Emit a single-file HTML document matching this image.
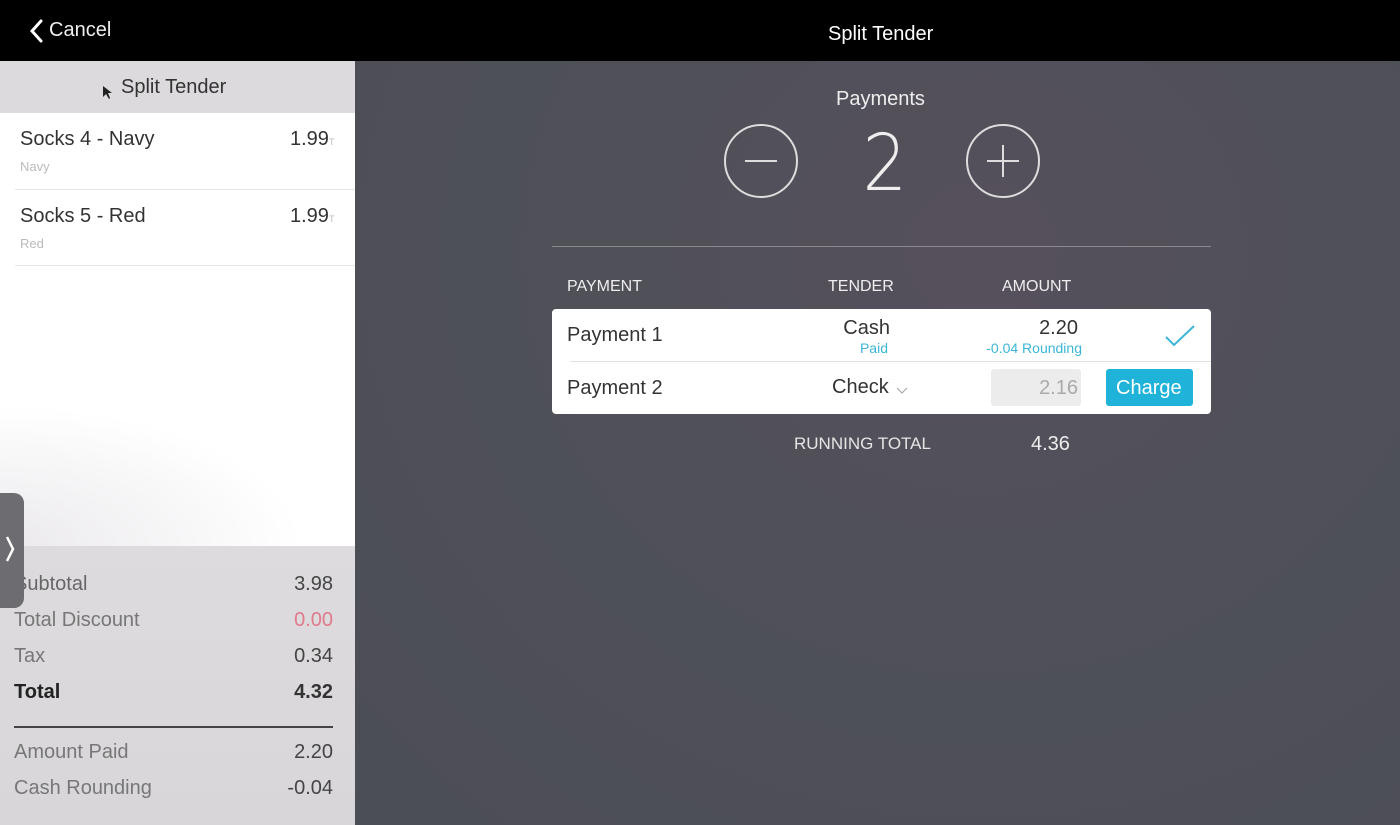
<!DOCTYPE html>
<html><head><meta charset="utf-8"><style>
*{margin:0;padding:0;box-sizing:border-box}
body{width:1400px;height:825px;overflow:hidden;font-family:"Liberation Sans",sans-serif;background:#000;position:relative}
.abs{position:absolute}
#top{left:0;top:0;width:1400px;height:61px;background:#000;color:#fff}
#left{left:0;top:61px;width:355px;height:764px;background:#fff}
#right{left:355px;top:61px;width:1045px;height:764px;background:radial-gradient(ellipse at 60% 25%,#56505c 0%,#4f5058 45%,#4c4e55 100%)}
.t{position:absolute;white-space:nowrap}
</style></head><body>
<div id="top" class="abs">
  <svg class="abs" style="left:28px;top:18px" width="16" height="26"><path d="M13 3 L4 13 L13 23" stroke="#fff" stroke-width="3" fill="none" stroke-linecap="round"/></svg>
  <div class="t" style="left:49px;top:19px;font-size:20px;color:#eee">Cancel</div>
  <div class="t" style="left:828px;top:23px;font-size:20px;color:#fff">Split Tender</div>
</div>
<div id="left" class="abs">
  <div class="abs" style="left:0;top:0;width:355px;height:52px;background:#dcdadc"></div>
  <div class="t" style="left:121px;top:15px;font-size:20px;color:#333">Split Tender</div>
  <svg class="abs" style="left:102px;top:24px" width="10" height="16"><path d="M1 1 L1 12 L4 9 L7 14 L8 13 L6 8 L10 8 Z" fill="#222"/></svg>
  <div class="t" style="left:20px;top:67px;font-size:20px;color:#333">Socks 4 - Navy</div>
  <div class="t" style="left:290px;top:67px;font-size:20px;color:#333">1.99<span style="font-size:9px;color:#bbb">T</span></div>
  <div class="t" style="left:20px;top:98px;font-size:13px;color:#bbb">Navy</div>
  <div class="abs" style="left:15px;top:128px;width:340px;height:1px;background:#e6e6e6"></div>
  <div class="t" style="left:20px;top:144px;font-size:20px;color:#333">Socks 5 - Red</div>
  <div class="t" style="left:290px;top:144px;font-size:20px;color:#333">1.99<span style="font-size:9px;color:#bbb">T</span></div>
  <div class="t" style="left:20px;top:175px;font-size:13px;color:#bbb">Red</div>
  <div class="abs" style="left:15px;top:204px;width:340px;height:1px;background:#e6e6e6"></div>
  <div class="abs" style="left:0;top:320px;width:355px;height:165px;background:radial-gradient(ellipse at 0% 100%,#ebe9ec 0%,rgba(255,255,255,0) 60%)"></div>
  <div class="abs" style="left:0;top:485px;width:355px;height:279px;background:linear-gradient(#dddbdd,#d8d6d9)"></div>
  <div class="t" style="left:14px;top:512px;font-size:20px;color:#666">Subtotal</div><div class="t" style="right:22px;top:512px;font-size:20px;color:#444">3.98</div>
  <div class="t" style="left:14px;top:548px;font-size:20px;color:#777">Total Discount</div><div class="t" style="right:22px;top:548px;font-size:20px;color:#e07a8c">0.00</div>
  <div class="t" style="left:14px;top:584px;font-size:20px;color:#777">Tax</div><div class="t" style="right:22px;top:584px;font-size:20px;color:#444">0.34</div>
  <div class="t" style="left:14px;top:620px;font-size:20px;color:#222;font-weight:bold">Total</div><div class="t" style="right:22px;top:620px;font-size:20px;color:#333;font-weight:bold">4.32</div>
  <div class="abs" style="left:14px;top:665px;width:319px;height:2px;background:#444"></div>
  <div class="t" style="left:14px;top:680px;font-size:20px;color:#777">Amount Paid</div><div class="t" style="right:22px;top:680px;font-size:20px;color:#444">2.20</div>
  <div class="t" style="left:14px;top:716px;font-size:20px;color:#777">Cash Rounding</div><div class="t" style="right:22px;top:716px;font-size:20px;color:#444">-0.04</div>
  <div class="abs" style="left:0;top:432px;width:24px;height:115px;background:#6d6c70;border-radius:0 10px 10px 0"></div>
  <svg class="abs" style="left:4px;top:473px" width="12" height="30"><path d="M3 3 L9 15 L3 27" stroke="#fff" stroke-width="2.5" fill="none"/></svg>
</div>
<div id="right" class="abs">
  <div class="t" style="left:481px;top:27px;font-size:20px;color:#eee">Payments</div>
  <div class="abs" style="left:369px;top:63px;width:74px;height:74px;border:2px solid #ddd;border-radius:50%"></div>
  <div class="abs" style="left:390px;top:99px;width:32px;height:1.5px;background:#ddd"></div>
  <div class="t" style="left:505px;top:58px;font-size:78px;color:#eee;font-family:'DejaVu Sans','Liberation Sans',sans-serif;transform:scaleX(0.9);font-weight:200">2</div>
  <div class="abs" style="left:611px;top:63px;width:74px;height:74px;border:2px solid #ddd;border-radius:50%"></div>
  <div class="abs" style="left:632px;top:99px;width:32px;height:1.5px;background:#ddd"></div>
  <div class="abs" style="left:647px;top:84px;width:1.5px;height:32px;background:#ddd"></div>
  <div class="abs" style="left:197px;top:185px;width:659px;height:1px;background:#8a8a90"></div>
  <div class="t" style="left:212px;top:217px;font-size:16px;color:#eee">PAYMENT</div>
  <div class="t" style="left:473px;top:217px;font-size:16px;color:#eee">TENDER</div>
  <div class="t" style="left:647px;top:217px;font-size:16px;color:#eee">AMOUNT</div>
  <div class="abs" style="left:197px;top:248px;width:659px;height:105px;background:#fff;border-radius:4px"></div>
  <div class="abs" style="left:215px;top:300px;width:641px;height:1px;background:#e2e2e2"></div>
  <div class="t" style="left:212px;top:263px;font-size:20px;color:#333">Payment 1</div>
  <div class="t" style="right:510px;top:256px;font-size:20px;color:#333">Cash</div>
  <div class="t" style="right:512px;top:279px;font-size:14px;color:#3bb6d6">Paid</div>
  <div class="t" style="right:322px;top:256px;font-size:20px;color:#333">2.20</div>
  <div class="t" style="right:318px;top:279px;font-size:14px;color:#3bb6d6">-0.04 Rounding</div>
  <svg class="abs" style="left:808px;top:262px" width="34" height="26"><path d="M3 14 L11 22 L31 3" stroke="#3bb6d6" stroke-width="2" fill="none"/></svg>
  <div class="t" style="left:212px;top:316px;font-size:20px;color:#333">Payment 2</div>
  <div class="t" style="left:477px;top:315px;font-size:20px;color:#333">Check</div>
  <svg class="abs" style="left:540px;top:324px" width="14" height="10"><path d="M2 3 L7 8 L12 3" stroke="#aaa" stroke-width="1.2" fill="none"/></svg>
  <div class="abs" style="left:636px;top:308px;width:90px;height:37px;background:#ececec;border-radius:3px"></div>
  <div class="t" style="right:322px;top:316px;font-size:20px;color:#aaa">2.16</div>
  <div class="abs" style="left:751px;top:308px;width:87px;height:37px;background:#1fb3da;border-radius:3px"></div>
  <div class="t" style="left:761px;top:316px;font-size:20px;color:#fff">Charge</div>
  <div class="t" style="left:439px;top:373px;font-size:17px;color:#e5e5e5">RUNNING TOTAL</div>
  <div class="t" style="left:676px;top:372px;font-size:20px;color:#eee">4.36</div>
</div>
</body></html>
